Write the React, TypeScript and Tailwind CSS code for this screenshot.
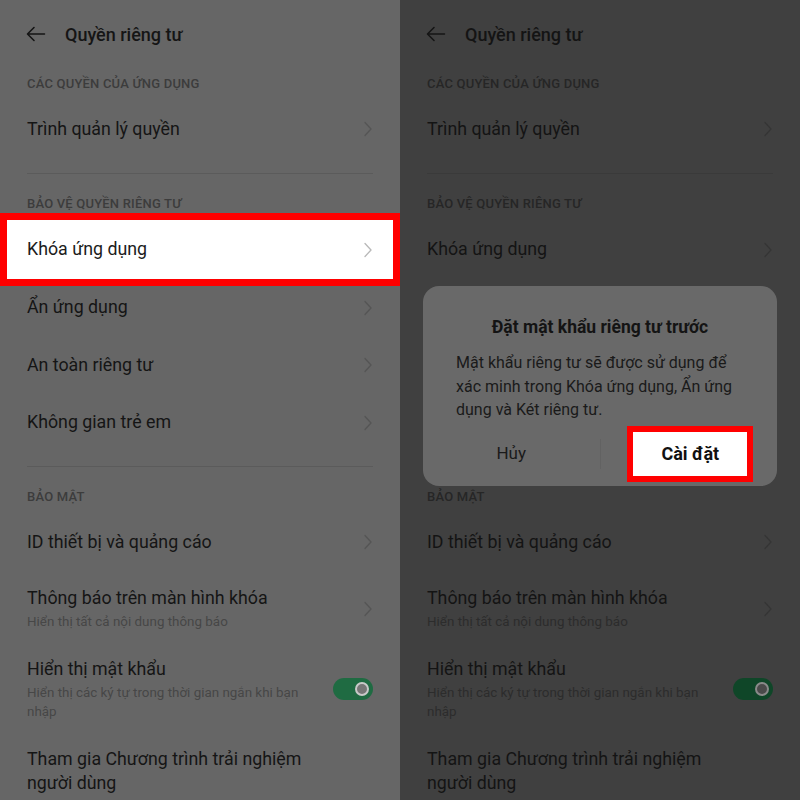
import React from "react";

type Theme = {
  bg: string;
  text: string;
  header: string;
  sub: string;
  chev: string;
  sep: string;
  track: string;
  knob: string;
};

const LIGHT: Theme = {
  bg: "bg-[#666666]",
  text: "text-[#151515]",
  header: "text-[#3c3c3c]",
  sub: "text-[#474747]",
  chev: "#555555",
  sep: "bg-[#5b5b5b]",
  track: "bg-[#1f6b42]",
  knob: "border-[#c9c9c9] bg-[#767676]",
};

const DARK: Theme = {
  bg: "bg-[#404040]",
  text: "text-[#141414]",
  header: "text-[#262626]",
  sub: "text-[#2c2c2c]",
  chev: "#353535",
  sep: "bg-[#3a3a3a]",
  track: "bg-[#0f4628]",
  knob: "border-[#8a8a8a] bg-[#4a4a4a]",
};

function Chevron({ color }: { color: string }) {
  return (
    <svg width="10" height="16" viewBox="0 0 10 16" fill="none">
      <polyline points="2,1.5 8,8 2,14.5" stroke={color} strokeWidth="1.3" strokeLinecap="round" strokeLinejoin="round" />
    </svg>
  );
}

function BackArrow() {
  return (
    <svg width="20" height="16" viewBox="0 0 20 16" fill="none">
      <path d="M18.5 8H1.8M8 1.5L1.5 8L8 14.5" stroke="#151515" strokeWidth="1.6" strokeLinecap="round" strokeLinejoin="round" />
    </svg>
  );
}

function Header({ t, label }: { t: Theme; label: string }) {
  return (
    <div className={`h-[32px] flex items-center px-[27px] text-[13px] font-medium tracking-[0.2px] ${t.header}`}>
      {label}
    </div>
  );
}

function Row({ t, label, h = "h-[58px]" }: { t: Theme; label: string; h?: string }) {
  return (
    <div className={`${h} flex items-center justify-between pl-[27px] pr-[27px] text-[17.8px] ${t.text}`}>
      <span>{label}</span>
      <Chevron color={t.chev} />
    </div>
  );
}

function Sep({ t }: { t: Theme }) {
  return (
    <div className="h-[30px] flex items-center px-[27px]">
      <div className={`h-px w-full ${t.sep}`} />
    </div>
  );
}

function Screen({ t, highlight, children }: { t: Theme; highlight: boolean; children?: React.ReactNode }) {
  return (
    <div className={`relative w-[400px] h-[800px] overflow-hidden ${t.bg}`}>
      <div className="h-[68px] flex items-center pl-[26px] gap-[19px]">
        <BackArrow />
        <span className={`text-[18px] font-medium ${t.text}`}>Quyền riêng tư</span>
      </div>
      <Header t={t} label="CÁC QUYỀN CỦA ỨNG DỤNG" />
      <Row t={t} label="Trình quản lý quyền" />
      <Sep t={t} />
      <Header t={t} label="BẢO VỆ QUYỀN RIÊNG TƯ" />
      {highlight ? (
        <div className="h-[59px] mx-[7px] bg-white outline-[7px] outline-solid outline-[#ff0000] flex items-center justify-between pl-[20px] pr-[20px] text-[17.8px] text-[#1c1c1c]">
          <span>Khóa ứng dụng</span>
          <Chevron color="#b8b8b8" />
        </div>
      ) : (
        <Row t={t} label="Khóa ứng dụng" h="h-[59px]" />
      )}
      <Row t={t} label="Ẩn ứng dụng" h="h-[57px]" />
      <Row t={t} label="An toàn riêng tư" />
      <Row t={t} label="Không gian trẻ em" h="h-[57px]" />
      <Sep t={t} />
      <Header t={t} label="BẢO MẬT" />
      <Row t={t} label="ID thiết bị và quảng cáo" />
      <div className="h-[76px] flex items-center justify-between px-[27px]">
        <div className="flex flex-col gap-[2px]">
          <span className={`text-[17.8px] leading-[24px] ${t.text}`}>Thông báo trên màn hình khóa</span>
          <span className={`text-[13.4px] leading-[20px] ${t.sub}`}>Hiển thị tất cả nội dung thông báo</span>
        </div>
        <Chevron color={t.chev} />
      </div>
      <div className="pt-[10px] pb-[26px] flex items-center justify-between px-[27px]">
        <div className="flex flex-col gap-[2px] w-[285px]">
          <span className={`text-[17.8px] leading-[24px] ${t.text}`}>Hiển thị mật khẩu</span>
          <span className={`text-[13.4px] leading-[19px] ${t.sub}`}>Hiển thị các ký tự trong thời gian ngắn khi bạn nhập</span>
        </div>
        <div className={`w-[40px] h-[22px] rounded-full ${t.track} flex items-center justify-end pr-[4px]`}>
          <div className={`w-[14px] h-[14px] rounded-full border-[2.5px] ${t.knob}`} />
        </div>
      </div>
      <div className={`px-[27px] text-[17.8px] leading-[24px] w-[340px] ${t.text}`}>
        Tham gia Chương trình trải nghiệm người dùng
      </div>
      {children}
    </div>
  );
}

function Dialog() {
  return (
    <div className="absolute left-[23px] top-[286px] w-[354px] h-[200px] rounded-[16px] bg-[#696969] flex flex-col">
      <div className="pt-[29px] h-[53px] text-center text-[17.5px] leading-[24px] font-bold text-[#141414]">
        Đặt mật khẩu riêng tư trước
      </div>
      <div className="mt-[12px] px-[33px] text-[16px] leading-[23.5px] text-[#1a1a1a] whitespace-nowrap">
        Mật khẩu riêng tư sẽ được sử dụng để
        <br />
        xác minh trong Khóa ứng dụng, Ẩn ứng
        <br />
        dụng và Két riêng tư.
      </div>
      <div className="flex-1 flex items-center">
        <div className="flex-1 flex items-center justify-center text-[17px] text-[#1a1a1a]">Hủy</div>
        <div className="w-px h-[30px] bg-[#626262]" />
        <div className="flex-1 flex items-center justify-center">
          <div className="w-[114px] h-[44px] ml-[3px] bg-white outline-[6px] outline-solid outline-[#ff0000] flex items-center justify-center text-[18px] font-bold text-[#111]">
            Cài đặt
          </div>
        </div>
      </div>
    </div>
  );
}

export default function App() {
  return (
    <div className="flex w-[800px] h-[800px] overflow-hidden" style={{ fontFamily: "Roboto, 'Noto Sans', sans-serif" }}>
      <Screen t={LIGHT} highlight={true} />
      <Screen t={DARK} highlight={false}>
        <Dialog />
      </Screen>
    </div>
  );
}
